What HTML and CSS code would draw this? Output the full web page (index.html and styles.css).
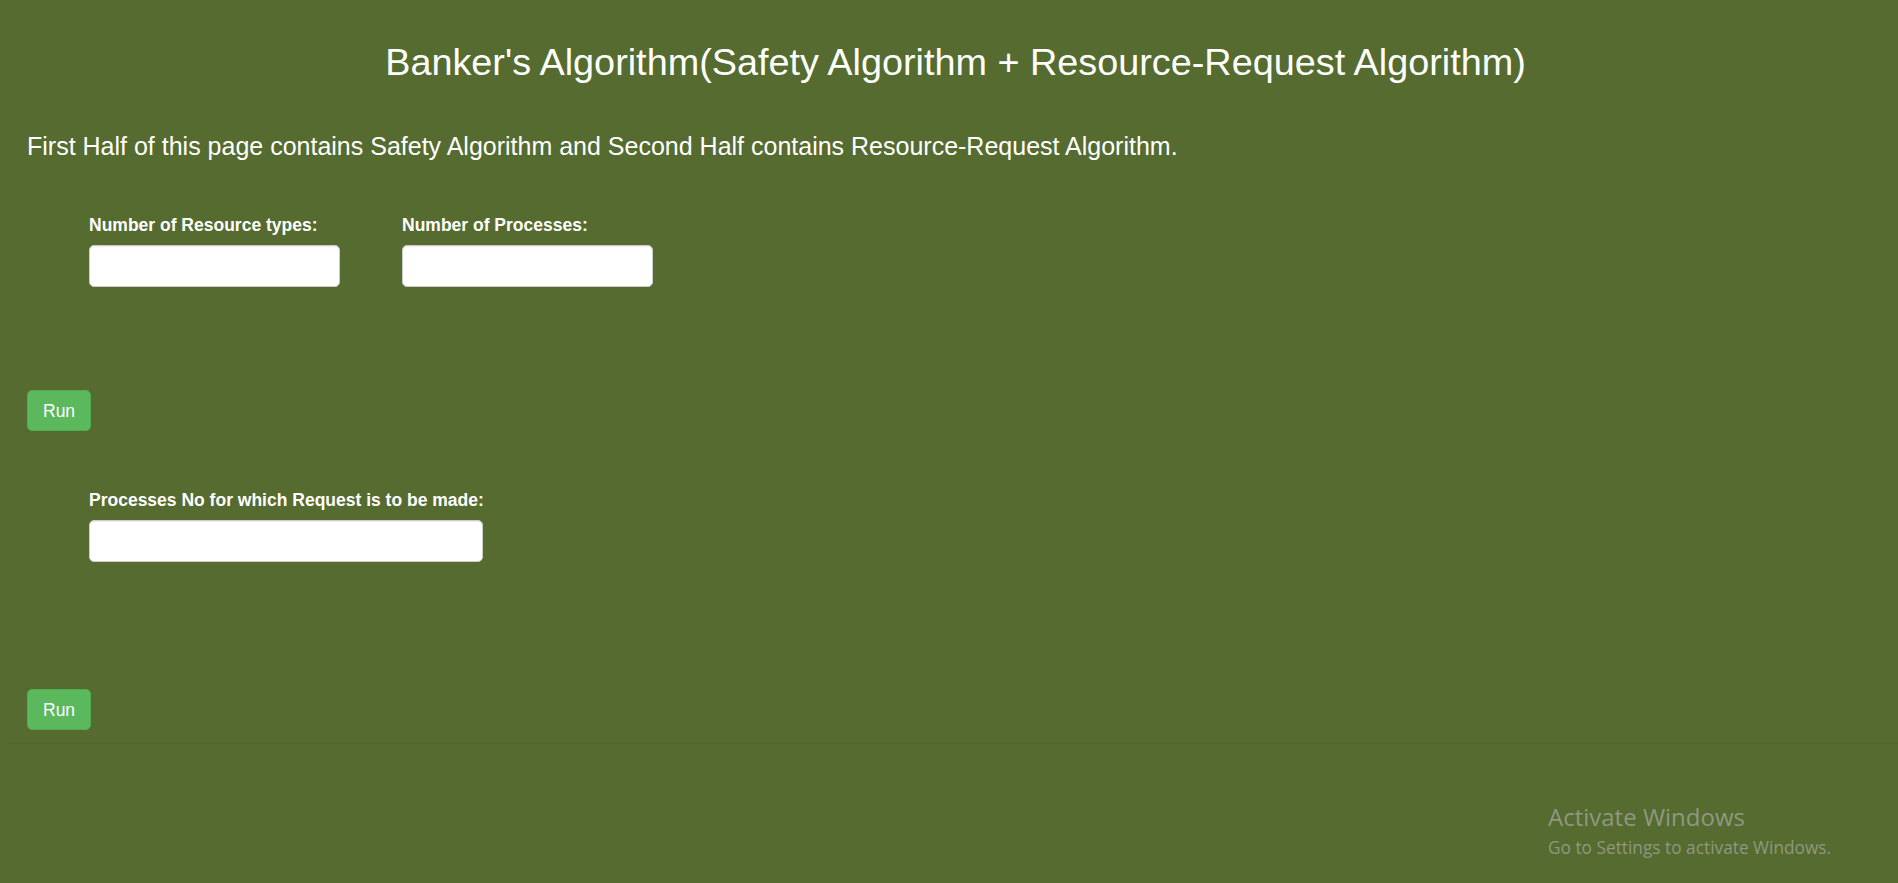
FILE: index.html
```html
<!DOCTYPE html>
<html lang="en">
<head>
<meta charset="utf-8">
<title>Banker's Algorithm</title>
<link rel="stylesheet" href="styles.css">
</head>
<body>
<div class="container">
  <h1 class="title">Banker's Algorithm(Safety Algorithm + Resource-Request Algorithm)</h1>
  <p class="intro">First Half of this page contains Safety Algorithm and Second Half contains Resource-Request Algorithm.</p>

  <div class="fields fields-first">
    <div class="field">
      <label class="field-label" for="res">Number of Resource types:</label>
      <input class="field-input" id="res" type="text">
    </div>
    <div class="field">
      <label class="field-label" for="proc">Number of Processes:</label>
      <input class="field-input" id="proc" type="text">
    </div>
  </div>

  <button class="btn btn-run btn-first" type="button">Run</button>

  <div class="fields fields-second">
    <div class="field">
      <label class="field-label" for="pno">Processes No for which Request is to be made:</label>
      <input class="field-input field-input-wide" id="pno" type="text">
    </div>
  </div>

  <button class="btn btn-run btn-second" type="button">Run</button>
</div>
<hr class="divider">

<div class="watermark">
  <div class="watermark-title">Activate Windows</div>
  <div class="watermark-sub">Go to Settings to activate Windows.</div>
</div>
</body>
</html>
```
FILE: styles.css
```css
html, body {
  margin: 0;
  padding: 0;
}

body {
  background: #556b2f;
  color: #ffffff;
  font-family: "Liberation Sans", Arial, sans-serif;
  min-height: 883px;
}

.container {
  padding: 0 14px 0 27px;
  display: flex;
  flex-direction: column;
  align-items: flex-start;
}

.title {
  align-self: stretch;
  margin: 41px 0 0;
  font-size: 37.8px;
  line-height: 43px;
  font-weight: normal;
  text-align: center;
}

.intro {
  margin: 47px 0 0;
  font-size: 25px;
  line-height: 30px;
}

.fields {
  display: flex;
  gap: 62px;
  padding-left: 62px;
}

.fields-first {
  margin-top: 52px;
}

.fields-second {
  margin-top: 57px;
}

.field {
  display: flex;
  flex-direction: column;
}

.field-label {
  font-size: 17.5px;
  line-height: 25px;
  font-weight: bold;
  margin-bottom: 7px;
}

.field-input {
  box-sizing: border-box;
  width: 251px;
  height: 42px;
  margin: 0;
  background: #ffffff;
  border: 1px solid #cccccc;
  border-radius: 5px;
  box-shadow: inset 0 1px 1px rgba(0, 0, 0, 0.075);
  font-family: inherit;
  font-size: 17.5px;
  padding: 0 15px;
}

.field-input-wide {
  width: 394px;
}

.btn {
  box-sizing: border-box;
  margin: 0;
  padding: 7.5px 15px;
  font-family: "Liberation Sans", Arial, sans-serif;
  font-size: 17.5px;
  line-height: 24px;
  border-radius: 5px;
  cursor: pointer;
}

.btn-run {
  background: #5cb85c;
  border: 1px solid #4cae4c;
  color: #ffffff;
}

.btn-first {
  margin-top: 103px;
}

.btn-second {
  margin-top: 127px;
}

.divider {
  margin: 13px 0 0 8px;
  border: 0;
  border-top: 1px solid rgba(0, 0, 0, 0.05);
  height: 0;
}

.watermark {
  position: absolute;
  left: 1548px;
  top: 802px;
  color: #8e9882;
  font-family: "Open Sans", "Noto Sans", sans-serif;
  pointer-events: none;
}

.watermark-title {
  font-size: 24px;
  line-height: 30px;
}

.watermark-sub {
  margin-top: 4.5px;
  font-size: 17.3px;
  line-height: 22px;
}
```
